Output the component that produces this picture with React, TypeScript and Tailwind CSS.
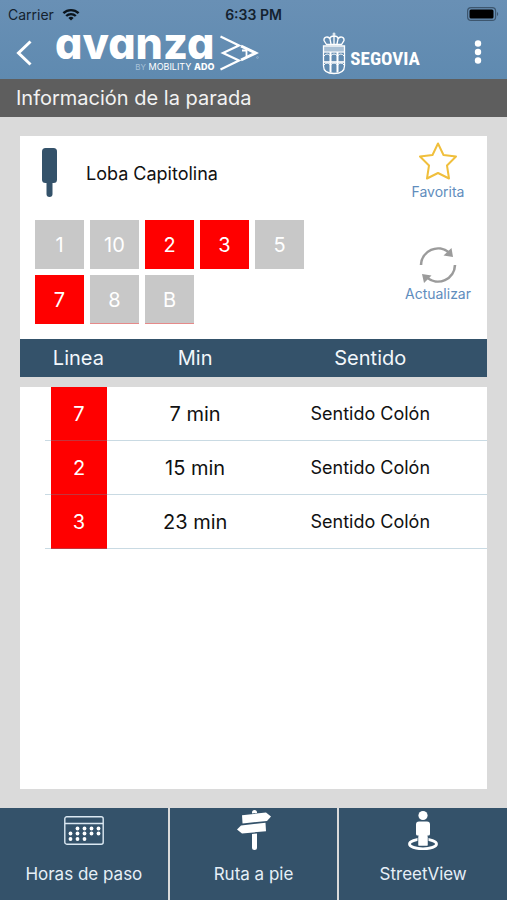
interface Line {
  id: string
  active: boolean
  redEdge?: boolean
}

interface Arrival {
  line: string
  minutes: number
  direction: string
}

const LINES: Line[] = [
  { id: '1', active: false },
  { id: '10', active: false },
  { id: '2', active: true },
  { id: '3', active: true },
  { id: '5', active: false },
  { id: '7', active: true },
  { id: '8', active: false, redEdge: true },
  { id: 'B', active: false, redEdge: true },
]

const ARRIVALS: Arrival[] = [
  { line: '7', minutes: 7, direction: 'Sentido Colón' },
  { line: '2', minutes: 15, direction: 'Sentido Colón' },
  { line: '3', minutes: 23, direction: 'Sentido Colón' },
]

function StatusBar() {
  return (
    <div className="grid h-7 grid-cols-3 items-center px-2 text-[14px] text-[#14222f]">
      <div className="flex items-center gap-2">
        <span>Carrier</span>
        <svg viewBox="0 0 18 13" className="h-[13px] w-[18px]" fill="none" stroke="#0b141c" strokeWidth="2.4">
          <path d="M1.4 5.2a11 11 0 0 1 15.2 0" />
          <path d="M4.2 8a7 7 0 0 1 9.6 0" />
          <path d="M9 12.6 6.4 10a3.8 3.8 0 0 1 5.2 0z" fill="#0b141c" stroke="none" />
        </svg>
      </div>
      <span className="text-center font-semibold">6:33 PM</span>
      <svg viewBox="0 0 32 14" className="h-[14px] w-8 justify-self-end">
        <rect x="0.6" y="0.6" width="28" height="12.8" rx="3.5" fill="none" stroke="#3d566e" strokeWidth="1.2" />
        <rect x="2.5" y="2.5" width="24" height="9" rx="1.5" fill="#000" />
        <path d="M30 5c1.6.6 1.6 3.4 0 4z" fill="#3d566e" />
      </svg>
    </div>
  )
}

function AvanzaLogo() {
  return (
    <div className="flex shrink-0 items-start gap-1.5 text-white">
      <div className="flex flex-col items-end gap-1">
        <span className="text-[43px] leading-[30px] font-extrabold [font-feature-settings:'cv11']">avanza</span>
        <span className="text-[9px] leading-[10px]">
          <span className="text-[8px] text-[#a9c3da]">BY</span> MOBILITY <b className="font-extrabold">ADO</b>
        </span>
      </div>
      <svg viewBox="0 0 39 36" className="mt-[7px] h-9 w-[39px]" fill="none" stroke="#fff" strokeWidth="2.2">
        <path d="M.5 1.500 19 10.500 3 18 19 25.500.5 34.500" />
        <path d="M21 11 35.500 18 21 25" strokeWidth="3" />
        <path d="M26.500 14v8M22 15.500h4.500" strokeWidth="1.800" />
        <circle cx="37.500" cy="22.500" r="0.900" stroke="#a9c3da" strokeWidth="0.600" />
      </svg>
    </div>
  )
}

function SegoviaLogo() {
  return (
    <div className="flex items-center gap-1 text-white">
      <svg viewBox="0 0 24 43" className="h-[43px] w-6" fill="none" stroke="#fff" strokeWidth="1.300">
        <path d="M4.500 12.500 2 8.500C1.500 5 6 3.500 8 7c0-4 8-4 8 0 2-3.500 6.500-2 6 1.500l-2.500 4zM8 7l1 5M16 7l-1 5M12 4.500V12" />
        <path d="M12 .5v4M10.500 2h3" strokeWidth="1" />
        <rect x="2" y="14.500" width="20" height="5" fill="#fff" fillOpacity="0.450" stroke="none" />
        <path d="M1.500 14h21v20c0 5-3.500 7.500-10.500 7.500S1.500 39 1.500 34z" />
        <path d="M2 20h20" />
        <path d="M8.500 20v20.500M15.500 20v20.500" strokeWidth="2" />
        <path d="M2 24q3-4 6.500 0 3.500-4 7 0 3.500-4 6.500 0M2 33q3-4 6.500 0 3.500-4 7 0 3.500-4 6.500 0" strokeWidth="1" />
        <path d="M2 30h20" strokeWidth="1.600" />
      </svg>
      <span className="mt-2.5 font-['Roboto_Condensed','Liberation_Sans_Narrow',sans-serif] text-[19px] leading-6 font-bold">
        SEGOVIA
      </span>
    </div>
  )
}

function Header() {
  return (
    <header className="bg-linear-to-b from-[#6990b5] to-[#5f8ab0]">
      <StatusBar />
      <div className="flex h-[51px] items-start pr-[19px] pl-4">
        <button type="button" aria-label="Volver" className="mt-3 w-[39px] shrink-0">
          <svg viewBox="0 0 16 26" className="h-[26px] w-4" fill="none" stroke="#fff" strokeWidth="3">
            <path d="M14.500 1.500 2.500 13l12 11.500" />
          </svg>
        </button>
        <AvanzaLogo />
        <div className="mt-1 ml-[63px]">
          <SegoviaLogo />
        </div>
        <button type="button" aria-label="Más opciones" className="mt-3 ml-auto px-1.5">
          <svg viewBox="0 0 8 24" className="h-6 w-2" fill="#fff">
            <circle cx="4" cy="3.500" r="3.200" />
            <circle cx="4" cy="12" r="3.200" />
            <circle cx="4" cy="20.500" r="3.200" />
          </svg>
        </button>
      </div>
    </header>
  )
}

function StopCard() {
  return (
    <section className="flex bg-white pb-[15px]">
      <div className="min-w-0 flex-1 pl-[15px]">
        <div className="flex h-[84px] items-center gap-7 pb-2.5 pl-[7px]">
          <svg viewBox="0 0 16 50" className="h-[50px] w-4" fill="#34526a">
            <rect width="15" height="35" rx="3.500" />
            <rect x="4.500" y="30" width="6" height="19" rx="3" />
          </svg>
          <h2 className="text-[18px] text-[#111]">Loba Capitolina</h2>
        </div>
        <div className="flex max-w-[275px] flex-wrap gap-1.5">
          {LINES.map(l => (
            <button
              key={l.id}
              type="button"
              className={`h-[49px] w-[49px] text-[20px] text-white ${l.active ? 'bg-[#ff0000]' : 'bg-[#c8c8c8]'} ${l.redEdge ? 'border-b border-[#e58a8a] pt-px' : ''}`}
            >
              {l.id}
            </button>
          ))}
        </div>
      </div>
      <div className="flex w-[98px] flex-col items-center text-[14px] leading-5 text-[#5f8dbd]">
        <button type="button" className="flex flex-col items-center gap-0.5 pt-1.5">
          <svg viewBox="0 0 38 38" className="h-[38px] w-[38px]" fill="none" stroke="#f0bf3c" strokeWidth="2" strokeLinejoin="round">
            <path d="M19 1.500 24.500 13 37 14.500 28 23.500 30 36.500 19 31 8 36.500 10 23.500 1 14.500 13.500 13z" />
          </svg>
          Favorita
        </button>
        <button type="button" className="mt-11 flex flex-col items-center">
          <svg viewBox="0 0 38 38" className="h-[38px] w-[38px]" fill="none" stroke="#9b9b9b" strokeWidth="2.600">
            <path d="M2 19A17 17 0 0 1 30 6.500M36 19A17 17 0 0 1 8 31.500" />
            <path d="M34 11 24.500 9.500 32.500 2zM3 28 12.500 29.500 5 37z" fill="#9b9b9b" stroke="none" />
          </svg>
          Actualizar
        </button>
      </div>
    </section>
  )
}

function ArrivalsTable() {
  return (
    <table className="w-full table-fixed border-collapse text-[20px]">
      <thead className="bg-[#34526a] text-[#f2f7fb]">
        <tr className="h-[43px]">
          <th className="w-1/4 font-normal">Linea</th>
          <th className="w-1/4 font-normal">Min</th>
          <th className="font-normal">Sentido</th>
        </tr>
      </thead>
      <tbody className="border-t-10 border-[#dadada] bg-white text-[#111]">
        {ARRIVALS.map(a => (
          <tr key={a.line}>
            <td className="p-0">
              <div className="ml-[25px] flex h-[54px]">
                <span className="w-1.5 border-b border-[#c9dae3]" />
                <span className="flex w-14 items-center justify-center border-b border-[#c4343c] bg-[#ff0000] text-white">
                  {a.line}
                </span>
                <span className="flex-1 border-b border-[#c9dae3]" />
              </div>
            </td>
            <td className="p-0">
              <div className="flex h-[54px] items-center justify-center border-b border-[#c9dae3]">{a.minutes} min</div>
            </td>
            <td className="p-0">
              <div className="flex h-[54px] items-center justify-center border-b border-[#c9dae3] text-[18px]">
                {a.direction}
              </div>
            </td>
          </tr>
        ))}
      </tbody>
    </table>
  )
}

function CalendarIcon() {
  const dots = [
    [13.5, 12.5], [20.5, 12.5], [27.5, 12.5], [34.5, 12.5],
    [6.5, 17.5], [13.5, 17.5], [20.5, 17.5], [27.5, 17.5], [34.5, 17.5],
    [6.5, 23], [13.5, 23], [20.5, 23],
  ]
  return (
    <svg viewBox="0 0 40 29" className="h-[29px] w-10" fill="none" stroke="#dbe8f2" strokeWidth="1.400">
      <rect x="0.800" y="0.800" width="38.400" height="27.400" rx="2" />
      <path d="M1 7.500h38" />
      {dots.map(([x, y]) => (
        <circle key={`${x}-${y}`} cx={x} cy={y} r="1.900" fill="#fff" stroke="none" />
      ))}
    </svg>
  )
}

function SignpostIcon() {
  return (
    <svg viewBox="0 0 36 40" className="h-10 w-9" fill="#fff">
      <path d="M16 3.500V2.500a2.500 2.500 0 0 1 5 0V3l-5 .6z" />
      <path d="M6 5.200 30 2.500 35 6.500 31 11 6.500 13.500z" />
      <path d="M5 15.500 29.500 12.800 30 21.200 6 23.500 1 19.500z" />
      <path d="M16 24l5-.5V37.500a2.500 2.500 0 0 1-5 0z" />
    </svg>
  )
}

function StreetViewIcon() {
  return (
    <svg viewBox="0 0 32 40" className="h-10 w-8" fill="#fff">
      <ellipse cx="16" cy="34" rx="13.500" ry="4.800" fill="none" stroke="#fff" strokeWidth="2.800" />
      <path d="M11 26h10v10H11z" stroke="#34526a" strokeWidth="1" />
      <circle cx="16" cy="5.500" r="4.600" />
      <path d="M12 11.500h8a3 3 0 0 1 3 3V24a1.500 1.500 0 0 1-1.500 1.500H20.500V35.500h-9V25.500H10.500A1.500 1.500 0 0 1 9 24v-9.500a3 3 0 0 1 3-3z" />
    </svg>
  )
}

const TAB = 'flex h-[92px] flex-1 flex-col items-center justify-between bg-[#34526a] pb-3.5 text-[17px] leading-6 text-[#e6eff7]'

function BottomBar() {
  return (
    <nav className="flex gap-0.5 bg-[#dadada]">
      <button type="button" className={`${TAB} pt-2`}>
        <CalendarIcon />
        Horas de paso
      </button>
      <button type="button" className={`${TAB} pt-0.5`}>
        <SignpostIcon />
        Ruta a pie
      </button>
      <button type="button" className={`${TAB} pt-0.5`}>
        <StreetViewIcon />
        StreetView
      </button>
    </nav>
  )
}

export default function App() {
  return (
    <div className="flex min-h-screen flex-col bg-[#dadada] font-['Inter',sans-serif]">
      <Header />
      <h1 className="h-[38px] bg-[#5e5e5e] px-4 text-[20px] leading-[38px] text-[#f2f2f2]">Información de la parada</h1>
      <main className="flex flex-1 flex-col px-5 py-[19px]">
        <StopCard />
        <ArrivalsTable />
        <div className="flex-1 bg-white" />
      </main>
      <BottomBar />
    </div>
  )
}
